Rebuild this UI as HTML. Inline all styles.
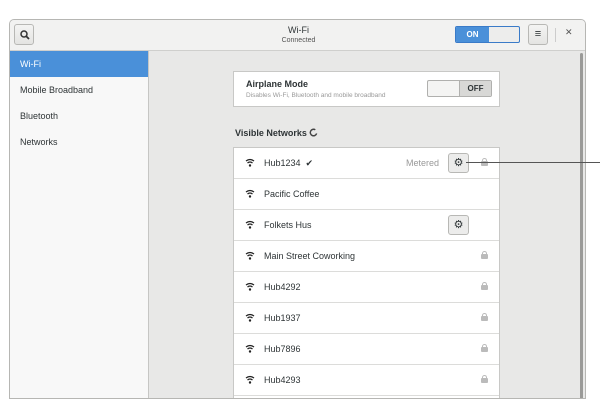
<!DOCTYPE html><html><head><style>
*{box-sizing:border-box;margin:0;padding:0}
body{width:600px;height:417px;background:#fff;font-family:"Liberation Sans","DejaVu Sans",sans-serif;position:relative;overflow:hidden;color:#2e3436}
.win{position:absolute;left:9px;top:19px;width:577px;height:380px;border:1px solid #b6b6b3;border-radius:5px 5px 0 0;overflow:hidden;background:#e8e8e7}
.hdr{position:absolute;left:0;top:0;width:100%;height:31px;background:#f2f2f1;border-bottom:1px solid #cfcfcd}
.btn{position:absolute;border:1px solid #b8b8b5;border-radius:3px;background:linear-gradient(#f4f4f3,#e4e4e2)}
.side{position:absolute;left:0;top:31px;width:139px;height:350px;background:#f8f8f8;border-right:1px solid #c6c6c4}
.side div{height:26px;line-height:26px;padding-left:10px;font-size:9px}
.box{position:absolute;left:223px;width:267px;background:#fff;border:1px solid #c8c8c6}
.row{height:31px;border-bottom:1px solid #dcdcda;position:relative;font-size:9px;line-height:30px;padding-left:30px}
.wifi{position:absolute;left:11px;top:10px}
.lock{position:absolute;right:11px;top:13px;width:7px;height:5px;background:#bbb;border-radius:1px}
.lock:before{content:"";position:absolute;left:1px;top:-3px;width:3px;height:3px;border:1px solid #bbb;border-bottom:none;border-radius:3px 3px 0 0}
.gear{position:absolute;right:30px;top:5px;width:21px;height:20px;border:1px solid #b8b8b5;border-radius:3px;background:#ececeb;font-size:11px;line-height:18px;text-align:center;padding:0}
</style></head><body>
<div class="win">
<div class="hdr">
<div class="btn" style="left:4px;top:4px;width:20px;height:21px"><svg width="20" height="20" viewBox="0 0 20 20"><circle cx="9" cy="9" r="3" fill="none" stroke="#333" stroke-width="1.5"/><path d="M11 11l3 3" stroke="#333" stroke-width="1.8"/></svg></div>
<div style="position:absolute;left:0;width:577px;top:5px;text-align:center;font-size:9px">Wi‑Fi</div>
<div style="position:absolute;left:0;width:577px;top:17px;text-align:center;font-size:7px;color:#555">Connected</div>
<div style="position:absolute;left:445px;top:6px;width:65px;height:17px;border:1px solid #3a7bc8;border-radius:2px;background:#ededec;overflow:hidden"><div style="width:33px;height:100%;background:#4a90d9;color:#fff;font-size:8px;line-height:16px;text-align:center;font-weight:bold">ON</div></div>
<div class="btn" style="left:518px;top:4px;width:20px;height:21px;text-align:center;font-size:11px;line-height:19px">≡</div>
<div style="position:absolute;left:545px;top:8px;width:1px;height:14px;background:#ccc"></div>
<div style="position:absolute;left:555px;top:7px;font-size:9px;color:#555">✕</div>
</div>
<div class="side">
<div style="background:#4a90d9;color:#fff">Wi‑Fi</div>
<div>Mobile Broadband</div><div>Bluetooth</div><div>Networks</div>
</div>
<div style="position:absolute;left:570px;top:33px;width:3px;height:350px;background:#9a9a98;border-radius:2px"></div>
<div class="box" style="top:51px;height:36px">
<div style="position:absolute;left:12px;top:7px;font-size:9px;font-weight:bold">Airplane Mode</div>
<div style="position:absolute;left:12px;top:20px;font-size:6.5px;color:#999">Disables Wi‑Fi, Bluetooth and mobile broadband</div>
<div style="position:absolute;left:193px;top:8px;width:65px;height:17px;border:1px solid #b0b0ae;border-radius:2px;background:#f4f4f3;overflow:hidden"><div style="position:absolute;right:0;width:32px;height:100%;background:#d8d8d6;border-left:1px solid #b0b0ae;font-size:8px;line-height:15px;text-align:center;font-weight:bold">OFF</div></div>
</div>
<div style="position:absolute;left:225px;top:108px;font-size:9px;font-weight:bold">Visible Networks <svg width="9" height="9" viewBox="0 0 10 10" style="vertical-align:-1px"><path d="M7 2A3.6 3.6 0 1 0 8.5 6" stroke="#444" stroke-width="1.6" fill="none"/></svg></div>
<div class="box" style="top:127px;height:260px">
<div class="row">Hub1234 &nbsp;✔<span style="position:absolute;right:60px;color:#999">Metered</span><div class="gear">⚙</div><span class="lock"></span><svg class="wifi" width="10" height="10" viewBox="0 0 10 10"><path d="M1 3q4-3 8 0M2.5 5q2.5-2 5 0" stroke="#222" stroke-width="1.3" fill="none"/><circle cx="5" cy="7.5" r="1.2" fill="#222"/></svg></div>
<div class="row">Pacific Coffee<svg class="wifi" width="10" height="10" viewBox="0 0 10 10"><path d="M1 3q4-3 8 0M2.5 5q2.5-2 5 0" stroke="#222" stroke-width="1.3" fill="none"/><circle cx="5" cy="7.5" r="1.2" fill="#222"/></svg></div>
<div class="row">Folkets Hus<div class="gear">⚙</div><svg class="wifi" width="10" height="10" viewBox="0 0 10 10"><path d="M1 3q4-3 8 0M2.5 5q2.5-2 5 0" stroke="#222" stroke-width="1.3" fill="none"/><circle cx="5" cy="7.5" r="1.2" fill="#222"/></svg></div>
<div class="row">Main Street Coworking<span class="lock"></span><svg class="wifi" width="10" height="10" viewBox="0 0 10 10"><path d="M1 3q4-3 8 0M2.5 5q2.5-2 5 0" stroke="#222" stroke-width="1.3" fill="none"/><circle cx="5" cy="7.5" r="1.2" fill="#222"/></svg></div>
<div class="row">Hub4292<span class="lock"></span><svg class="wifi" width="10" height="10" viewBox="0 0 10 10"><path d="M1 3q4-3 8 0M2.5 5q2.5-2 5 0" stroke="#222" stroke-width="1.3" fill="none"/><circle cx="5" cy="7.5" r="1.2" fill="#222"/></svg></div>
<div class="row">Hub1937<span class="lock"></span><svg class="wifi" width="10" height="10" viewBox="0 0 10 10"><path d="M1 3q4-3 8 0M2.5 5q2.5-2 5 0" stroke="#222" stroke-width="1.3" fill="none"/><circle cx="5" cy="7.5" r="1.2" fill="#222"/></svg></div>
<div class="row">Hub7896<span class="lock"></span><svg class="wifi" width="10" height="10" viewBox="0 0 10 10"><path d="M1 3q4-3 8 0M2.5 5q2.5-2 5 0" stroke="#222" stroke-width="1.3" fill="none"/><circle cx="5" cy="7.5" r="1.2" fill="#222"/></svg></div>
<div class="row">Hub4293<span class="lock"></span><svg class="wifi" width="10" height="10" viewBox="0 0 10 10"><path d="M1 3q4-3 8 0M2.5 5q2.5-2 5 0" stroke="#222" stroke-width="1.3" fill="none"/><circle cx="5" cy="7.5" r="1.2" fill="#222"/></svg></div>
</div>
</div>
<div style="position:absolute;left:466px;top:162px;width:134px;height:1px;background:#555"></div>
</body></html>
